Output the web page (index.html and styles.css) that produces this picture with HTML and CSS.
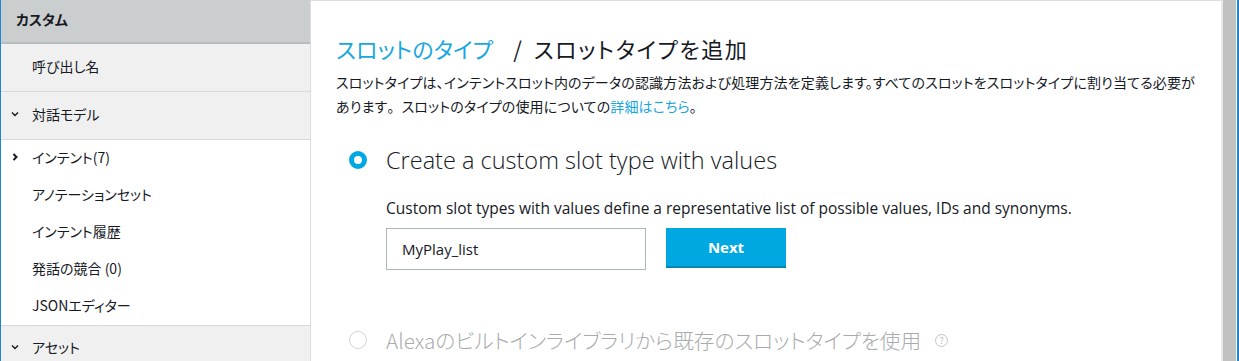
FILE: index.html
```html
<!DOCTYPE html>
<html lang="ja">
<head>
<meta charset="utf-8">
<title>スロットタイプを追加</title>
<link rel="stylesheet" href="styles.css">
</head>
<body>
<div class="app">
  <aside class="sidebar">
    <div class="side-head">カスタム</div>
    <div class="side-row gray">呼び出し名</div>
    <div class="side-row gray"><svg class="chev" viewBox="0 0 10 10"><polyline points="2,3.5 5,6.5 8,3.5"/></svg>対話モデル</div>
    <ul class="side-list">
      <li><svg class="chev right" viewBox="0 0 10 10"><polyline points="3.5,2 6.5,5 3.5,8"/></svg>インテント(7)</li>
      <li>アノテーションセット</li>
      <li>インテント履歴</li>
      <li>発話の競合 (0)</li>
      <li>JSONエディター</li>
    </ul>
    <div class="side-row gray last"><svg class="chev" viewBox="0 0 10 10"><polyline points="2,3.5 5,6.5 8,3.5"/></svg>アセット</div>
  </aside>
  <main class="main">
    <h1 class="title"><a class="crumb" href="#">スロットのタイプ</a><span class="sep">/</span><span class="page">スロットタイプを追加</span></h1>
    <p class="intro">スロットタイプは、インテントスロット内のデータの認識方法および処理方法を定義します。すべてのスロットをスロットタイプに割り当てる必要があります<span class="full">。</span>スロットのタイプの使用についての<a href="#">詳細はこちら</a><span class="full">。</span></p>
    <div class="option">
      <span class="radio on"></span>
      <span class="opt-label">Create a custom slot type with values</span>
    </div>
    <div class="sub">
      <p class="sub-desc">Custom slot types with values define a representative list of possible values, IDs and synonyms.</p>
      <div class="form-row">
        <div class="input">MyPlay_list</div>
        <button class="btn">Next</button>
      </div>
    </div>
    <div class="option disabled">
      <span class="radio"></span>
      <span class="opt-label jp">Alexaのビルトインライブラリから既存のスロットタイプを使用</span>
      <span class="help">?</span>
    </div>
  </main>
  <div class="scrollbar"></div>
</div>
</body>
</html>
```

FILE: styles.css
```css
* { box-sizing: border-box; }
html, body { margin: 0; padding: 0; background: #fff; }
body {
  font-family: "Noto Sans CJK JP", "Noto Sans", sans-serif;
  color: #16191f;
  font-feature-settings: "palt" 1;
}
.app {
  display: flex;
  height: 361px;
  overflow: hidden;
  border-left: 1px solid #1f86d6;
  border-right: 2px solid #1f86d6;
}
.sidebar {
  width: 310px;
  flex: none;
  border-right: 1px solid #dcdcdc;
  background: #f0f0f0;
  font-size: 14px;
}
.side-head {
  height: 44px;
  background: #cbcecf;
  border-bottom: 2px solid #b9bcbe;
  padding-left: 15px;
  font-weight: 700;
  display: flex;
  align-items: center;
  padding-bottom: 4px;
}
.side-row {
  height: 48px;
  border-bottom: 1px solid #d9d9d9;
  display: flex;
  align-items: center;
  padding-left: 31px;
  padding-bottom: 4px;
}
.side-row.last { border-bottom: 0; border-top: 1px solid #d9d9d9; height: 46px; }
.chev {
  width: 10px;
  height: 10px;
  margin-left: -22px;
  margin-right: 12px;
  fill: none;
  stroke: #16191f;
  stroke-width: 1.4;
}
.chev.right { stroke-width: 2; }
.side-list {
  list-style: none;
  margin: 0;
  padding: 0;
  background: #fff;
}
.side-list li {
  height: 37px;
  display: flex;
  align-items: center;
  padding-left: 31px;
  padding-bottom: 4px;
}
.main {
  flex: 1;
  border-top: 1px solid #dedede;
  border-right: 2px solid #e8e8e8;
  padding: 30px 25px 0 25px;
  min-width: 0;
}
.title {
  margin: 0 0 5px;
  font-size: 22px;
  line-height: 34px;
  font-weight: 400;
}
.crumb { color: #19a7e0; text-decoration: none; letter-spacing: 0.2px; }
.sep { margin: 0 12px 0 20px; }
.page { letter-spacing: 1.6px; }
.intro {
  margin: 0;
  font-size: 14px;
  line-height: 24px;
  letter-spacing: 0.15px;
}
.intro .full { font-feature-settings: normal; }
.intro a { color: #19a7e0; text-decoration: none; }
.option {
  margin-top: 24px;
  height: 36px;
  display: flex;
  align-items: center;
  padding-left: 13px;
}
.radio {
  width: 18px;
  height: 18px;
  border-radius: 50%;
  border: 1px solid #d4d4d4;
  background: #fff;
  flex: none;
  margin-right: 19px;
}
.radio.on { border: 5px solid #00a8e1; }
.opt-label {
  font-family: "Open Sans", "Noto Sans", sans-serif;
  font-weight: 300;
  font-size: 23.5px;
}
.opt-label.jp { font-family: "Noto Sans CJK JP", sans-serif; font-weight: 300; font-size: 20.7px; }
.disabled { margin-top: 52px; color: #a7abad; }
.help {
  margin-left: 14px;
  width: 13px;
  height: 13px;
  border-radius: 50%;
  border: 1px solid #c4c4c4;
  font-size: 9px;
  line-height: 11px;
  text-align: center;
  color: #bbb;
}
.sub { margin-left: 50px; }
.sub-desc {
  margin: 20px 0 0;
  font-family: "Open Sans", "Noto Sans", sans-serif;
  font-size: 15.5px;
  line-height: 20px;
}
.form-row {
  margin-top: 10px;
  display: flex;
  gap: 20px;
  align-items: flex-start;
}
.input {
  width: 260px;
  height: 42px;
  border: 1px solid #aab7b8;
  padding-left: 15px;
  display: flex;
  align-items: center;
  font-family: "Open Sans", "Noto Sans", sans-serif;
  font-size: 15px;
}
.btn {
  width: 120px;
  height: 40px;
  background: #00a8e1;
  border: 0;
  border-bottom: 2px solid #0087b8;
  color: #fff;
  font-family: "Open Sans", "Noto Sans", sans-serif;
  font-weight: 700;
  font-size: 15px;
  padding: 0;
}
.scrollbar {
  width: 14px;
  flex: none;
  background: #c1c1c1;
  border-right: 1px solid #fff;
}
```
